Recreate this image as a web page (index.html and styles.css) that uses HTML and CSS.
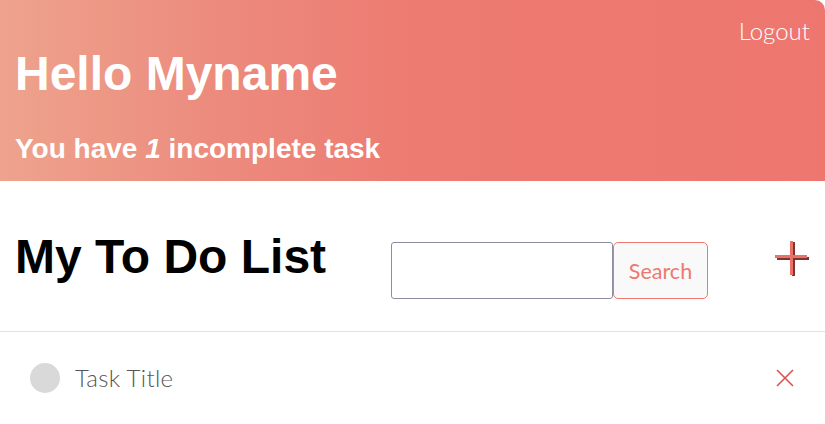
FILE: index.html
```html
<!DOCTYPE html>
<html>
<head>
<meta charset="utf-8">
<link rel="stylesheet" href="styles.css">
</head>
<body>
<header class="hero">
  <div class="hero-top"><a class="logout">Logout</a></div>
  <h1 class="hello">Hello Myname</h1>
  <p class="count">You have <em>1</em> incomplete task</p>
</header>
<section class="toolbar">
  <h2 class="title">My To Do List</h2>
  <form class="search">
    <input class="search-input" type="text">
    <button class="search-btn" type="button">Search</button>
  </form>
  <button class="add" type="button" aria-label="Add">
    <svg width="36" height="38" viewBox="0 0 36 38">
      <rect x="2" y="16" width="32" height="3" fill="#7d3532"/>
      <rect x="17" y="1" width="3" height="34" fill="#7d3532"/>
      <rect x="0" y="14" width="32" height="3" fill="#ec706a"/>
      <rect x="15" y="0" width="3" height="34" fill="#ec706a"/>
    </svg>
  </button>
</section>
<ul class="tasks">
  <li class="task">
    <span class="check"></span>
    <span class="task-title">Task Title</span>
    <button class="remove" type="button" aria-label="Delete">
      <svg width="18" height="18" viewBox="0 0 18 18">
        <path d="M1 1 L17 17 M17 1 L1 17" stroke="#d9524f" stroke-width="1.6" fill="none"/>
      </svg>
    </button>
  </li>
</ul>
</body>
</html>
```
FILE: styles.css
```css
* { box-sizing: border-box; }
html, body { margin: 0; padding: 0; background: #fff; }
body { font-family: "Liberation Sans", Arial, sans-serif; }

.hero {
  height: 181px;
  background: linear-gradient(90deg, #eea38d 0%, #ec8c7e 25%, #ed7b72 50%, #ed776f 100%);
  border-top-right-radius: 10px;
  color: #fff;
  padding: 0 15px 0 15px;
  display: flex;
  flex-direction: column;
}
.hero-top {
  display: flex;
  justify-content: flex-end;
  padding-top: 16px;
  height: 48px;
}
.logout {
  font-family: "Lato", "Open Sans", sans-serif;
  font-weight: 300;
  font-size: 24px;
  color: #fff;
}
.hello {
  margin: 0;
  font-size: 48px;
  line-height: 52px;
  font-weight: bold;
}
.count {
  margin: 33px 0 0;
  font-size: 28px;
  line-height: 32px;
  font-weight: bold;
}
.count em { font-style: italic; }

.toolbar {
  height: 151px;
  border-bottom: 1px solid #e2e2e2;
  display: flex;
  align-items: flex-start;
  padding: 0 14px 0 15px;
}
.title {
  margin: 50px 0 0;
  font-size: 48px;
  line-height: 52px;
  font-weight: bold;
  color: #000;
  width: 376px;
}
.search {
  display: flex;
  margin-top: 61px;
}
.search-input {
  width: 222px;
  height: 57px;
  border: 1px solid #8e8d9f;
  border-radius: 3px;
  margin: 0;
  padding: 0 8px;
}
.search-btn {
  width: 95px;
  height: 57px;
  margin: 0;
  border: 1px solid #ed7870;
  border-radius: 5px;
  background: #f9f9f9;
  color: #ed7870;
  font-family: "Lato", "Open Sans", sans-serif;
  font-size: 21.5px;
  padding: 0;
}
.add {
  margin: 60px 0 0 auto;
  border: 0;
  background: none;
  padding: 0;
  width: 36px;
  height: 38px;
}
.add svg { display: block; }

.tasks { list-style: none; margin: 0; padding: 0; }
.task {
  display: flex;
  align-items: center;
  height: 92px;
  padding: 0 31px 0 30px;
}
.check {
  width: 30px;
  height: 30px;
  border-radius: 50%;
  background: #d9d9d9;
  flex: none;
}
.task-title {
  margin-left: 15px;
  font-family: "Lato", "Open Sans", sans-serif;
  font-weight: 300;
  font-size: 24px;
  letter-spacing: 0.3px;
  color: #555;
  margin-top: -2px;
}
.remove {
  margin-left: auto;
  border: 0;
  background: none;
  padding: 0;
  width: 18px;
  height: 18px;
}
.remove svg { display: block; }
```
